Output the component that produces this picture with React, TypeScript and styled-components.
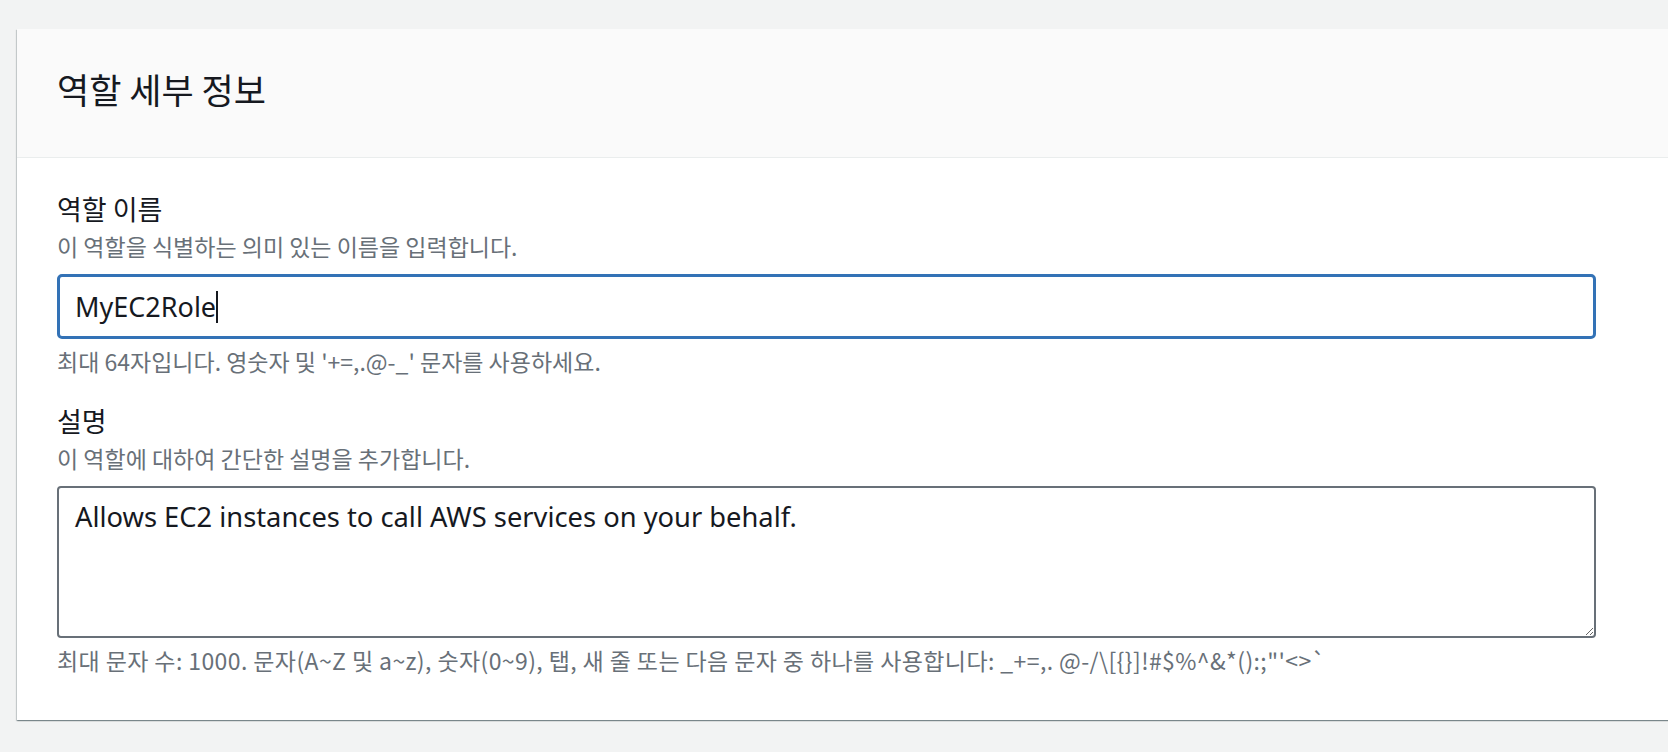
import React from 'react';
import styled, { createGlobalStyle } from 'styled-components';

const GlobalStyle = createGlobalStyle`
  html, body {
    margin: 0;
    padding: 0;
    background-color: #f2f3f3;
  }
  body {
    font-family: "Noto Sans CJK KR", "Noto Sans", sans-serif;
    color: #16191f;
  }
`;

const Page = styled.div`
  width: 1668px;
  height: 752px;
  padding: 29px 0 0 17px;
  box-sizing: border-box;
  overflow: hidden;
`;

const Card = styled.section`
  width: 1700px;
  background-color: #fff;
  box-shadow:
    0 1px 1px 0 rgba(0, 28, 36, 0.3),
    1px 1px 1px 0 rgba(0, 28, 36, 0.15),
    -1px 1px 1px 0 rgba(0, 28, 36, 0.15);
`;

const CardHeader = styled.header`
  background-color: #fafafa;
  border-bottom: 1px solid #eaeded;
  padding: 40px 40px 48px;
`;

const CardTitle = styled.h2`
  margin: 0;
  font-size: 35px;
  line-height: 40px;
  font-weight: 400;
  color: #16191f;
`;

const CardBody = styled.div`
  padding: 34px 40px 45px;
  display: flex;
  flex-direction: column;
  gap: 28px;
`;

const Field = styled.div`
  width: 1539px;
  display: flex;
  flex-direction: column;
`;

const Label = styled.label`
  font-size: 27px;
  line-height: 34px;
  font-weight: 400;
  color: #16191f;
`;

const Description = styled.div`
  margin-top: 5px;
  font-size: 23px;
  line-height: 30px;
  color: #687078;
`;

const Hint = styled.div<{ $tracking?: number }>`
  margin-top: 7px;
  font-size: 23px;
  line-height: 30px;
  letter-spacing: ${(p) => p.$tracking ?? 0}px;
  color: #687078;
  white-space: nowrap;
`;

const InputBox = styled.div`
  margin-top: 13px;
  height: 65px;
  box-sizing: border-box;
  border: 3px solid #3372b6;
  border-radius: 5px;
  padding: 0 15px;
  display: flex;
  align-items: center;
  background-color: #fff;
`;

const InputValue = styled.span`
  font-family: "Noto Sans", "Noto Sans CJK KR", sans-serif;
  font-size: 27px;
  line-height: 32px;
  color: #16191f;
`;

const Caret = styled.span`
  display: inline-block;
  width: 2px;
  height: 32px;
  background-color: #16191f;
`;

const TextArea = styled.textarea`
  margin-top: 13px;
  height: 152px;
  box-sizing: border-box;
  border: 2px solid #687078;
  border-radius: 4px;
  padding: 13px 16px;
  font-family: "Noto Sans", "Noto Sans CJK KR", sans-serif;
  font-size: 27.3px;
  line-height: 32px;
  color: #16191f;
  resize: vertical;
  outline: none;
  background-color: #fff;
`;

const descriptionRule =
  '최대 문자 수: 1000. 문자(A~Z 및 a~z), 숫자(0~9), 탭, 새 줄 또는 다음 문자 중 하나를 사용합니다: _+=,. @-/\\[{}]!#$%^&*():;"\'<>`';

const App: React.FC = () => {
  return (
    <>
      <GlobalStyle />
      <Page>
        <Card>
          <CardHeader>
            <CardTitle>역할 세부 정보</CardTitle>
          </CardHeader>
          <CardBody>
            <Field>
              <Label>역할 이름</Label>
              <Description>이 역할을 식별하는 의미 있는 이름을 입력합니다.</Description>
              <InputBox>
                <InputValue>MyEC2Role</InputValue>
                <Caret />
              </InputBox>
              <Hint>최대 64자입니다. 영숫자 및 '+=,.@-_' 문자를 사용하세요.</Hint>
            </Field>
            <Field>
              <Label>설명</Label>
              <Description>이 역할에 대하여 간단한 설명을 추가합니다.</Description>
              <TextArea defaultValue="Allows EC2 instances to call AWS services on your behalf." />
              <Hint $tracking={0.4}>{descriptionRule}</Hint>
            </Field>
          </CardBody>
        </Card>
      </Page>
    </>
  );
};

export default App;
